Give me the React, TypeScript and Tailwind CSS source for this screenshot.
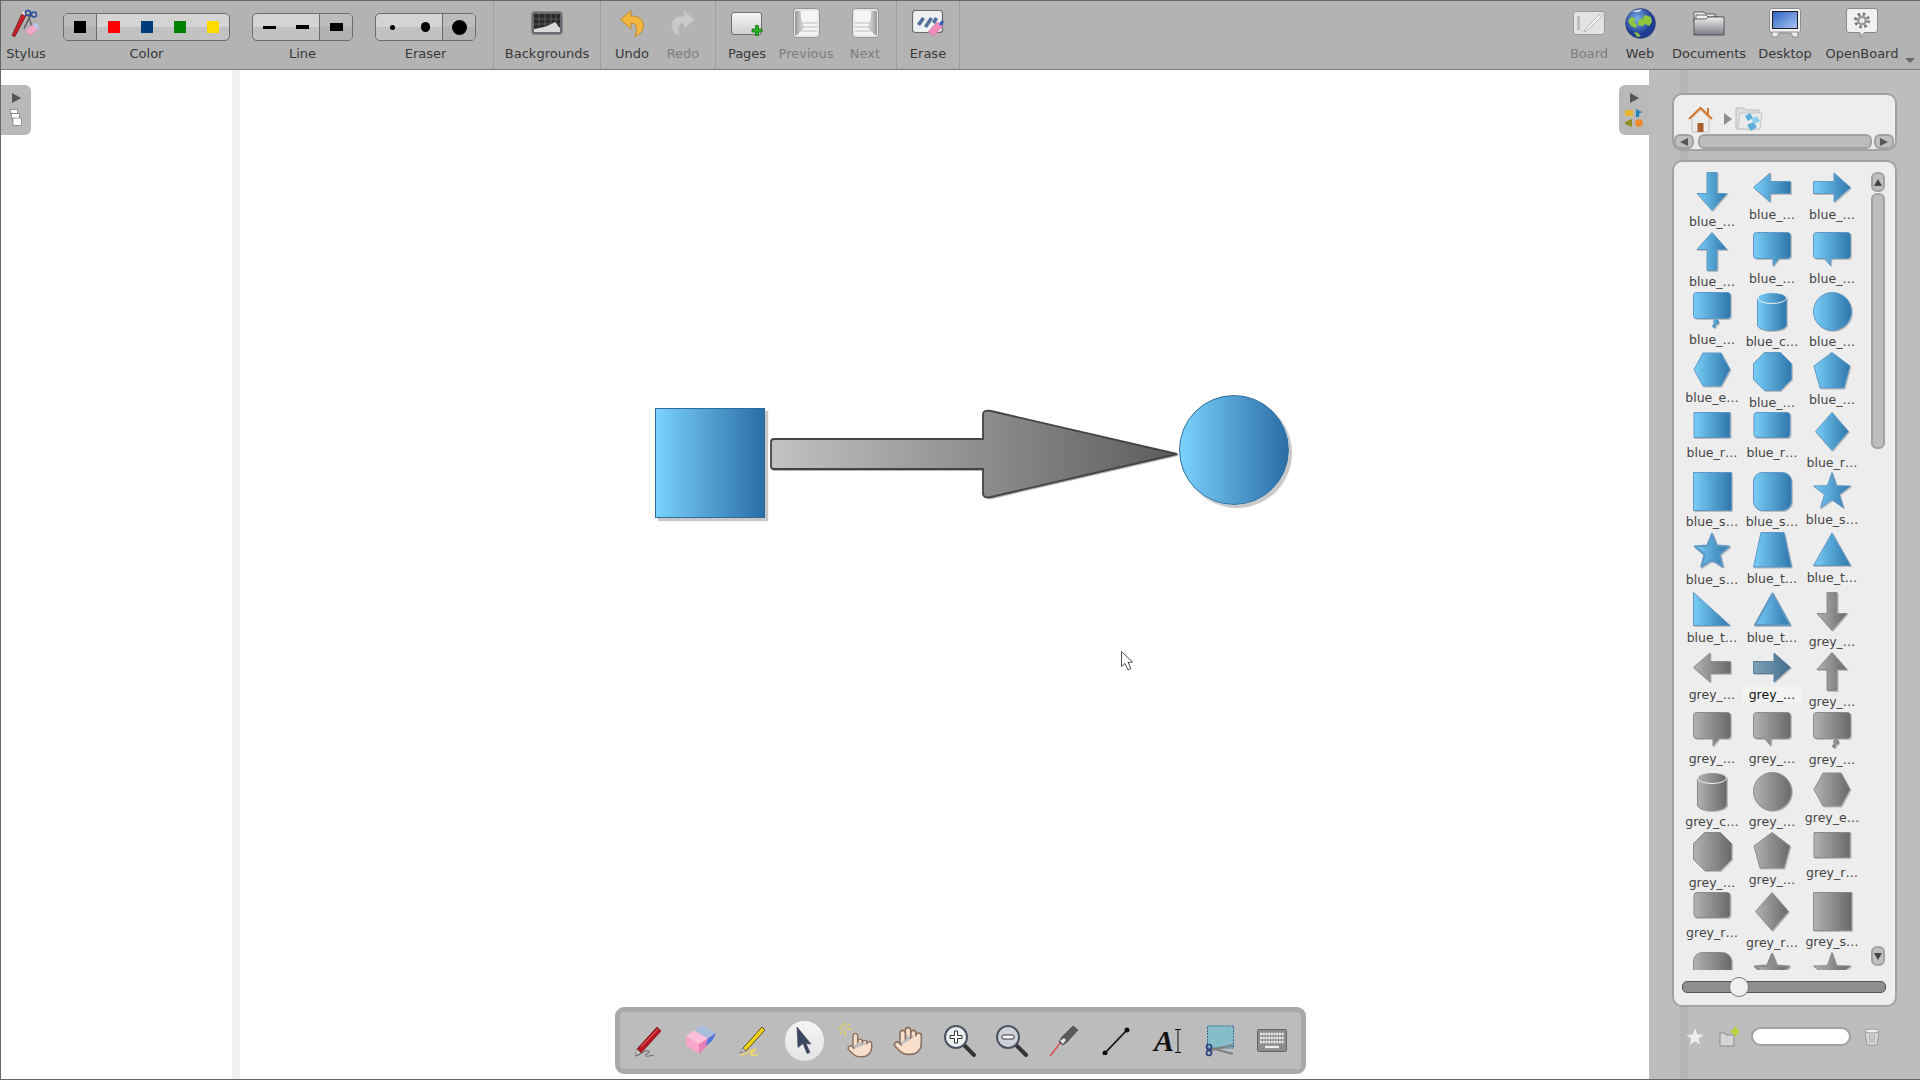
import React from 'react';
import { Hand, Pointer } from 'lucide-react';

const star = (cx: number, cy: number, R: number, r: number) => {
    const pts: string[] = [];
    for (let i = 0; i < 10; i++) {
        const a = (-90 + i * 36) * (Math.PI / 180);
        const d = i % 2 === 0 ? R : r;
        pts.push(`${(cx + d * Math.cos(a)).toFixed(1)} ${(cy + d * Math.sin(a)).toFixed(1)}`);
    }
    return `M${pts.join('L')}z`;
};

type ShapeDef = { w: number; h: number; body: React.ReactNode };

const SHAPES: Record<string, ShapeDef> = {
    down: { w: 32, h: 39, body: <path d="M11 .5h10v21h10L16 38.5 1 21.5h10z" /> },
    up: { w: 32, h: 39, body: <path d="M16 .5l15 17H21v21H11v-21H1z" /> },
    left: { w: 38, h: 32, body: <path d="M.5 15.5L17 1v8.5h20.5v12H17V30z" /> },
    right: { w: 38, h: 32, body: <path d="M37.5 15.5L21 1v8.5H.5v12H21V30z" /> },
    bubbleR: { w: 38, h: 36, body: <path d="M3.5.5h31a3 3 0 0 1 3 3v20a3 3 0 0 1-3 3H26l-6 7.5v-7.5H3.5a3 3 0 0 1-3-3v-20a3 3 0 0 1 3-3z" /> },
    bubbleL: { w: 38, h: 36, body: <path d="M3.5.5h31a3 3 0 0 1 3 3v20a3 3 0 0 1-3 3H18l-.5 7-6-7H3.5a3 3 0 0 1-3-3v-20a3 3 0 0 1 3-3z" /> },
    bubbleT: {
        w: 38,
        h: 37,
        body: (
            <>
                <rect x=".5" y=".5" width="37" height="26" rx="3" />
                <circle cx="23" cy="30" r="2.5" />
                <circle cx="21" cy="34" r="1.5" />
            </>
        ),
    },
    cyl: {
        w: 30,
        h: 39,
        body: (
            <>
                <path d="M.5 6v27c0 3 6 5.5 14.5 5.5S29.500 36 29.500 33V6z" />
                <ellipse cx="15" cy="6" rx="14.500" ry="5.500" stroke="#f2f2f2" />
            </>
        ),
    },
    circle: { w: 39, h: 39, body: <circle cx="19.500" cy="19.500" r="19" /> },
    hex: { w: 38, h: 35, body: <path d="M10 1h18l9 16.500L28 34H10L1 17.500z" /> },
    oct: { w: 39, h: 40, body: <path d="M11.500.5h16l11 11v16l-11 11h-16l-11-11v-16z" /> },
    pent: { w: 38, h: 37, body: <path d="M19 .5L37 14l-6 22H7L1 14z" /> },
    rect: { w: 38, h: 30, body: <path d="M1 .5h36v25H1z" /> },
    rrect: { w: 38, h: 30, body: <rect x="1" y=".5" width="36" height="25" rx="3" /> },
    diamond: { w: 34, h: 40, body: <path d="M17 .5l16.500 19L17 38.500.5 19.500z" /> },
    square: { w: 39, h: 39, body: <path d="M.5.5h38v38H.5z" /> },
    rsquare: { w: 39, h: 39, body: <rect x=".5" y=".5" width="38" height="38" rx="9" /> },
    star: { w: 38, h: 37, body: <path d={star(19, 20, 19.500, 7.800)} /> },
    rstar: { w: 38, h: 37, body: <path d={star(19, 20, 18, 8)} strokeWidth="2" strokeLinejoin="round" /> },
    trap: { w: 39, h: 36, body: <path d="M8 .5h23L38.500 35H.5z" /> },
    tri: { w: 38, h: 35, body: <path d="M19 1l18.500 32.500H.5z" /> },
    rtri: { w: 38, h: 35, body: <path d="M.5.5l36.500 33H.5z" /> },
    rdtri: { w: 39, h: 35, body: <path d="M19.500 1.500l17.500 31.500H2z" strokeWidth="2" strokeLinejoin="round" /> },
};

const ROWS: [string, string][][] = [
    [['down', 'blue_…'], ['left', 'blue_…'], ['right', 'blue_…']],
    [['up', 'blue_…'], ['bubbleR', 'blue_…'], ['bubbleL', 'blue_…']],
    [['bubbleT', 'blue_…'], ['cyl', 'blue_c…'], ['circle', 'blue_…']],
    [['hex', 'blue_e…'], ['oct', 'blue_…'], ['pent', 'blue_…']],
    [['rect', 'blue_r…'], ['rrect', 'blue_r…'], ['diamond', 'blue_r…']],
    [['square', 'blue_s…'], ['rsquare', 'blue_s…'], ['star', 'blue_s…']],
    [['rstar', 'blue_s…'], ['trap', 'blue_t…'], ['tri', 'blue_t…']],
    [['rtri', 'blue_t…'], ['rdtri', 'blue_t…'], ['down', 'grey_…']],
    [['left', 'grey_…'], ['right', 'grey_…'], ['up', 'grey_…']],
    [['bubbleR', 'grey_…'], ['bubbleL', 'grey_…'], ['bubbleT', 'grey_…']],
    [['cyl', 'grey_c…'], ['circle', 'grey_…'], ['hex', 'grey_e…']],
    [['oct', 'grey_…'], ['pent', 'grey_…'], ['rect', 'grey_r…']],
    [['rrect', 'grey_r…'], ['diamond', 'grey_r…'], ['square', 'grey_s…']],
    // last row is cut by the scroll area, its labels never show
    [['rsquare', 'grey'], ['rstar', 'grey'], ['star', 'grey']],
];

const Thumb = ({ kind, label, selected }: { kind: string; label: string; selected: boolean }) => {
    const s = SHAPES[kind];
    const grey = label.startsWith('grey');
    const fill = selected ? 'url(#selGrad)' : grey ? 'url(#greyGrad)' : 'url(#blueGrad)';
    const stroke = selected ? '#5a7f9a' : grey ? '#8a8a8a' : '#5d97c2';
    return (
        <div className="flex flex-col items-center">
            <svg width={s.w} height={s.h} className="shrink-0 overflow-visible drop-shadow-[1px_1px_0.5px_rgba(0,0,0,0.2)]">
                <g fill={fill} stroke={stroke} strokeWidth="1">{s.body}</g>
            </svg>
            {label.includes('…') && (
                <div className={`mt-[3px] w-[60px] text-center text-[12.5px] leading-[15px] ${selected ? 'bg-[#f3f3f3] text-[#111]' : 'text-[#444]'}`}>
                    {label}
                </div>
            )}
        </div>
    );
};

const Tool = ({ w, label, off, children }: { w: string; label: string; off?: boolean; children: React.ReactNode }) => (
    <div className={`flex shrink-0 flex-col items-center ${w}`}>
        <div className="flex h-[45px] items-center justify-center pb-px">{children}</div>
        <div className={`h-[16px] text-[13px] leading-[16px] whitespace-nowrap ${off ? 'text-[#7e7e7e]' : 'text-[#383838]'}`}>{label}</div>
    </div>
);

const Sep = () => <div className="h-full w-px shrink-0 border-l border-dotted border-[#8e8e8e]" />;

const Group = ({ label, w, selected, items }: { label: string; w: string; selected: number; items: React.ReactNode[] }) => (
    <div className={`flex shrink-0 flex-col items-center ${w}`}>
        <div className="h-[45px] pt-3">
            <div className="flex h-[28px] rounded-[5px] border border-[#6c6c6c] bg-linear-to-b from-[#d4d4d4] from-50% to-[#c2c2c2] to-50%">
                {items.map((it, i) => (
                    <div
                        key={i}
                        className={`flex h-full w-[33px] items-center justify-center ${
                            i === selected
                                ? `bg-linear-to-b from-[#bcbcbc] from-50% to-[#b2b2b2] to-50% ${i === 0 ? 'rounded-l-[4px] border-r border-[#6c6c6c]' : 'rounded-r-[4px] border-l border-[#6c6c6c]'}`
                                : ''
                        }`}
                    >
                        {it}
                    </div>
                ))}
            </div>
        </div>
        <div className="h-[16px] text-[13px] leading-[16px] text-[#383838]">{label}</div>
    </div>
);

const Swatch = ({ className }: { className: string }) => <div className={`h-[12px] w-[12px] ${className}`} />;

const StylusIcon = () => (
    <svg width="32" height="29" viewBox="0 0 32 28">
        <path d="M2 26L12 4l4 2L5 27z" fill="#c8202a" stroke="#6d1014" strokeWidth=".7" />
        <path d="M11 4l2-3 3 2-1 3z" fill="#e8e8e8" stroke="#777" strokeWidth=".5" />
        <path d="M14 19L21 5" stroke="#555" strokeWidth="1.500" />
        <path d="M22 17L18 5" stroke="#666" strokeWidth="1.500" />
        <circle cx="24" cy="5" r="2.500" fill="none" stroke="#2d4fa3" strokeWidth="1.500" />
        <circle cx="18" cy="3.500" r="2.500" fill="none" stroke="#2d4fa3" strokeWidth="1.500" />
        <path d="M16 20l10-7 4 5-9 8-5-3z" fill="#f2a9c9" stroke="#b98aa5" strokeWidth=".5" />
        <path d="M23 15l3-2 4 5-3 2z" fill="#b8c6e8" />
    </svg>
);

const BackgroundsIcon = () => (
    <svg width="32" height="24" viewBox="0 0 32 24">
        <rect x=".5" y=".5" width="31" height="23" rx="3" fill="#666c74" stroke="#8a8a8a" />
        <rect x="3" y="3" width="26" height="18" fill="#2a2a2a" />
        <path d="M3 8h26M3 13h26M8 3v18M14 3v18M20 3v18M25 3v18" stroke="#6c6c6c" strokeWidth=".7" />
        <path d="M3 21v-3c8-1 14-3 21-7 2 3 4 5 5 6v4z" fill="#d8d8d8" />
    </svg>
);

const UndoIcon = ({ off, flip }: { off?: boolean; flip?: boolean }) => (
    <svg width="24" height="27" viewBox="0 0 24 27" className={flip ? '' : '-scale-x-100'}>
        <path
            d="M13 .5L23.500 9.500 13 19v-6C8 13 6 17 9 26.500 3 24 .5 20 .5 15.500.5 9 6 6 13 6z"
            fill={off ? '#c9c9c9' : '#f3b540'}
            stroke={off ? '#bbbbbb' : '#b17f26'}
            strokeWidth=".8"
        />
    </svg>
);

const PagesIcon = () => (
    <svg width="32" height="27" viewBox="0 0 32 27" className="translate-y-[2px]">
        <rect x=".5" y=".5" width="30" height="22" rx="2.500" fill="url(#pageGrad)" stroke="#6f6f6f" />
        <path d="M22 15h3.500v-3.500h3V15H32v3h-3.500v3.500h-3V18H22z" transform="translate(-1 2)" fill="#27b224" stroke="#116e10" strokeWidth=".8" />
    </svg>
);

const TurnIcon = ({ flip }: { flip?: boolean }) => (
    <svg width="27" height="30" viewBox="0 0 27 30" className={flip ? '-scale-x-100' : ''}>
        <rect x=".5" y=".5" width="26" height="29" rx="3" fill="#e6e6e6" stroke="#949494" />
        <path d="M8 3h16v24H4l8-8c-3-4-5-10-4-16z" fill="#f5f5f5" />
        <path d="M2 3h6c-1 6 1 12 4 16l-8 8H2z" fill="url(#curlGrad)" />
        <path d="M9 15h15M7 19h17M5 23h19" stroke="#bdbdbd" strokeWidth="1" />
    </svg>
);

const EraseIcon = () => (
    <svg width="33" height="27" viewBox="0 0 33 27">
        <rect x=".5" y=".5" width="30" height="22" rx="3" fill="#eef0f2" stroke="#6b6b6b" strokeWidth="1.200" />
        <path d="M5 14l5-7 3 2-5 7zM12 16l6-9 3 2-6 9zM20 12l3-5 3 2-3 5z" fill="#526f9c" />
        <path d="M16 22l9-10 6 4-9 10z" fill="#f08cbd" stroke="#c86c99" strokeWidth=".5" />
        <path d="M27 14l3-4 2 2-3 4z" fill="#2a5fc0" />
    </svg>
);

const BoardIcon = () => (
    <svg width="32" height="24" viewBox="0 0 32 24">
        <rect x=".5" y=".5" width="31" height="23" rx="2.500" fill="#e3e3e3" stroke="#9a9a9a" />
        <rect x="4" y="5" width="3" height="14" fill="#bdbdbd" />
        <path d="M11 21l3-5L27 3l2 2-13 13z" fill="#f4f4f4" stroke="#a8a8a8" strokeWidth=".8" />
    </svg>
);

const GlobeIcon = () => (
    <svg width="31" height="31" viewBox="0 0 31 31">
        <circle cx="15.500" cy="15.500" r="15" fill="url(#globeGrad)" stroke="#23356f" strokeWidth=".5" />
        <path d="M13 13l5-3 2-3 6 2 1 5-3 4-4-2-2 2-5-1zM3 13l3-4 4 1-1 4 3 3-1 3-5-2zM9 24l4 1 3 3-4 1z" fill="#8fc63d" />
        <path d="M7 4c3-2 7-3 10-2l-3 2H9z" fill="#e6f2fb" opacity=".8" />
    </svg>
);

const FolderIcon = () => (
    <svg width="32" height="28" viewBox="0 0 32 28">
        <path d="M1 3h10l2 2h9v8H1z" fill="#e6e6e6" stroke="#444" strokeWidth=".8" />
        <path d="M3 6h10l2 2h11v8H3z" fill="#f0f0f0" stroke="#444" strokeWidth=".8" />
        <path d="M1 26V10h12l2-2h16v18z" fill="url(#folderGrad)" stroke="#3d3d3d" strokeWidth=".8" />
    </svg>
);

const DesktopIcon = () => (
    <svg width="32" height="30" viewBox="0 0 32 30">
        <rect x=".5" y=".5" width="31" height="24" rx="2.500" fill="#f3f3f3" stroke="#8c8c8c" />
        <rect x="3.500" y="3.500" width="25" height="17" fill="url(#screenGrad)" stroke="#1d1d1d" />
        <path d="M3 24v5h5l2-4h12l2 4h5v-5z" fill="#eeeeee" stroke="#8c8c8c" />
    </svg>
);

const OpenBoardIcon = () => (
    <svg width="32" height="30" viewBox="0 0 32 30">
        <path d="M3 .5h26a2.500 2.500 0 0 1 2.500 2.500v19a2.500 2.500 0 0 1-2.500 2.500H18l-3 5-1-5H3A2.500 2.500 0 0 1 .5 22V3A2.500 2.500 0 0 1 3 .5z" fill="#f1f1f1" stroke="#8a8a8a" />
        <circle cx="16" cy="12.500" r="6.500" fill="none" stroke="#777" strokeWidth="3" strokeDasharray="2.500 2.600" />
        <circle cx="16" cy="12.500" r="5" fill="#9a9a9a" />
        <circle cx="16" cy="12.500" r="2.500" fill="#efefef" />
    </svg>
);

const HomeIcon = () => (
    <svg width="25" height="27" viewBox="0 0 25 27">
        <path d="M4 12v14h17V12L12.500 4z" fill="#ededed" stroke="#b0b0b0" strokeWidth=".7" />
        <rect x="9.500" y="17" width="6" height="9" fill="#a85f2d" />
        <path d="M1 13L12.500 2 24 13" fill="none" stroke="#d9762b" strokeWidth="2" />
        <path d="M19 2h2v6h-2z" fill="#d9762b" />
    </svg>
);

const LibFolderIcon = () => (
    <svg width="28" height="27" viewBox="0 0 28 27">
        <path d="M1 2h8l2 2h13v19H1z" fill="#dcdcdc" stroke="#bcbcbc" />
        <path d="M5 7h22l-2 16H3z" fill="#eaeaea" stroke="#c6c6c6" />
        <path d="M10 10l5-3 3 5-5 3z" fill="#5aaed8" />
        <path d="M16 13l6-3 3 5-5 3z" fill="#8ccdea" />
        <path d="M12 19l6-3 4 5-6 4z" fill="#5aaed8" />
    </svg>
);

const ScrollBtn = ({ dir, className }: { dir: 'l' | 'r' | 'u' | 'd'; className: string }) => (
    <div className={`flex items-center justify-center rounded-[6px] border-2 border-[#a2a2a2] bg-[#bfbfbf] ${className}`}>
        {dir === 'l' && <div className="h-0 w-0 border-y-[4px] border-r-[8px] border-y-transparent border-r-[#555]" />}
        {dir === 'r' && <div className="h-0 w-0 border-y-[4px] border-l-[8px] border-y-transparent border-l-[#555]" />}
        {dir === 'u' && <div className="h-0 w-0 border-x-[4px] border-b-[7px] border-x-transparent border-b-[#444]" />}
        {dir === 'd' && <div className="h-0 w-0 border-x-[4px] border-t-[7px] border-x-transparent border-t-[#444]" />}
    </div>
);

const BOTTOM_TOOLS: React.ReactNode[] = [
    <svg key="pen" width="34" height="34" viewBox="0 0 34 34">
        <path d="M6 25L26 3l4 4L10 29z" fill="#b8161f" stroke="#6e0d12" strokeWidth=".7" />
        <path d="M10 23L27 5" stroke="#ee6b70" strokeWidth="1" />
        <path d="M6 25l4 4-6 3z" fill="#c9c9c9" stroke="#555" strokeWidth=".5" />
        <path d="M4 32c6-1 10-7 14-5 2 2-5 3-3 5 3 1 6-1 8-1" fill="none" stroke="#777" strokeWidth="1.200" />
    </svg>,
    <svg key="eraser" width="34" height="34" viewBox="0 0 34 34">
        <path d="M3 12L19 1l14 8-17 11z" fill="#fbc0da" />
        <path d="M11 6.500L19 1l14 8-8 5.500z" fill="#a8bcdc" />
        <path d="M3 12l13 8v10L3 22z" fill="#f9a6cd" />
        <path d="M16 20L33 9l-9 13-8 8z" fill="#e87fb4" />
        <path d="M25 14.500L33 9l-4 8-6.500 5z" fill="#4a78e0" />
    </svg>,
    <svg key="marker" width="34" height="34" viewBox="0 0 34 34">
        <path d="M8 24L27 3l3 3L11 27z" fill="#f2cf17" stroke="#3c3316" strokeWidth=".8" />
        <path d="M8 24l3 3-6 2z" fill="#cfcfcf" stroke="#555" strokeWidth=".5" />
        <path d="M5 31c5 0 12-5 15-6 2 1-6 4-4 6 3 1 6-1 7-1" fill="none" stroke="#f0d768" strokeWidth="1.600" />
    </svg>,
    <div key="select" className="flex h-[40px] w-[39px] items-center justify-center rounded-full bg-linear-to-b from-[#f5f5f5] to-[#e4e4e4]">
        <svg width="16" height="27" viewBox="0 0 16 27">
            <path d="M1 0l14 17-5-.5 4 9-3 1-4-10-5 4z" fill="#3c4660" stroke="#2a3044" strokeWidth=".5" />
        </svg>
    </div>,
    <div key="pointer" className="relative h-[36px] w-[36px]">
        <Pointer size={28} strokeWidth={1.200} fill="#f7dfcb" color="#8a7060" className="absolute right-0 bottom-0" />
        <svg width="16" height="16" viewBox="0 0 16 16" className="absolute -top-[2px] -left-[1px]">
            <path d="M8 1v5M8 10v5M1 8h5M10 8h5M3 3l3 3M13 3l-3 3M3 13l3-3" stroke="#f0d93c" strokeWidth="1" />
        </svg>
    </div>,
    <Hand key="hand" size={32} strokeWidth={1.200} fill="#f7dfcb" color="#8a7060" />,
    <svg key="zoomin" width="34" height="34" viewBox="0 0 34 34">
        <path d="M20 20l11 11" stroke="#333" strokeWidth="4" strokeLinecap="round" />
        <circle cx="13" cy="13" r="11" fill="#eceff2" stroke="#4c5463" strokeWidth="2" />
        <path d="M11.500 7h3v4.500H19v3h-4.500V19h-3v-4.500H7v-3h4.500z" fill="#fff" stroke="#333" strokeWidth="1" />
    </svg>,
    <svg key="zoomout" width="34" height="34" viewBox="0 0 34 34">
        <path d="M20 20l11 11" stroke="#333" strokeWidth="4" strokeLinecap="round" />
        <circle cx="13" cy="13" r="11" fill="#cfd3d8" stroke="#4c5463" strokeWidth="2" />
        <rect x="7" y="11" width="12" height="4" rx="1" fill="#fff" stroke="#333" strokeWidth="1" />
    </svg>,
    <svg key="laser" width="34" height="34" viewBox="0 0 34 34">
        <path d="M3 32l11-14" stroke="#d9534f" strokeWidth="1.500" />
        <path d="M12 18l3-5 11-11 5 4-11 12-4 3z" fill="#5a5a5a" stroke="#333" strokeWidth=".6" />
        <path d="M13 17l4-3 2 2-3 4z" fill="#e4e4e4" />
    </svg>,
    <svg key="line" width="28" height="28" viewBox="0 0 28 28">
        <path d="M3 26L25 3" stroke="#111" strokeWidth="1.800" />
        <circle cx="3" cy="26" r="2.500" fill="#111" />
        <circle cx="25" cy="3" r="2.500" fill="#111" />
    </svg>,
    <div key="text" className="flex items-center">
        <span className="font-['Liberation_Serif',serif] text-[30px] leading-none font-bold text-[#111] italic">A</span>
        <svg width="8" height="24" viewBox="0 0 8 24">
            <path d="M1 .5h6M4 .5v23M1 23.500h6" stroke="#111" strokeWidth="1" fill="none" />
        </svg>
    </div>,
    <svg key="capture" width="30" height="32" viewBox="0 0 30 32">
        <rect x="2.500" y="1" width="26" height="22" fill="#86bdca" stroke="#2d6a9a" strokeDasharray="2 1" />
        <path d="M6 25l22-5M6 23l22 6" stroke="#7f7f7f" strokeWidth="2" />
        <circle cx="4" cy="22" r="2.500" fill="none" stroke="#2b3f7e" strokeWidth="1.600" />
        <circle cx="4" cy="28" r="2.500" fill="none" stroke="#2b3f7e" strokeWidth="1.600" />
    </svg>,
    <svg key="keyboard" width="30" height="23" viewBox="0 0 30 23">
        <rect x=".5" y=".5" width="29" height="22" rx="1" fill="#8c8c8c" stroke="#666" />
        <path d="M3 5h24M3 9h24M3 13h24" stroke="#ededed" strokeWidth="2.400" strokeDasharray="2 .7" />
        <path d="M8 18h14" stroke="#ededed" strokeWidth="2.400" />
    </svg>,
];

export default function App() {
    return (
        <div className="flex h-screen w-screen flex-col overflow-hidden border-y border-l border-[#666] bg-white font-['DejaVu_Sans',sans-serif]">
            <svg className="absolute h-0 w-0">
                <defs>
                    <linearGradient id="blueGrad"><stop offset="0" stopColor="#79cef8" /><stop offset="1" stopColor="#2f76ab" /></linearGradient>
                    <linearGradient id="greyGrad"><stop offset="0" stopColor="#b2b2b2" /><stop offset="1" stopColor="#696969" /></linearGradient>
                    <linearGradient id="selGrad"><stop offset="0" stopColor="#7d9fb8" /><stop offset="1" stopColor="#446f8e" /></linearGradient>
                    <linearGradient id="bigArrow"><stop offset="0" stopColor="#c2c2c2" /><stop offset="1" stopColor="#5c5c5c" /></linearGradient>
                    <linearGradient id="pageGrad" x2="0" y2="1"><stop offset="0" stopColor="#f7f7f7" /><stop offset="1" stopColor="#cfcfcf" /></linearGradient>
                    <linearGradient id="curlGrad"><stop offset="0" stopColor="#9a9a9a" /><stop offset="1" stopColor="#e8e8e8" /></linearGradient>
                    <linearGradient id="folderGrad" x2="0" y2="1"><stop offset="0" stopColor="#eeeef0" /><stop offset="1" stopColor="#7c7d85" /></linearGradient>
                    <linearGradient id="screenGrad" x2="1" y2="1"><stop offset="0" stopColor="#2c5fc0" /><stop offset="1" stopColor="#a9c8f4" /></linearGradient>
                    <radialGradient id="globeGrad" cx=".4" cy=".35"><stop offset="0" stopColor="#7db4e8" /><stop offset="1" stopColor="#1f3c94" /></radialGradient>
                </defs>
            </svg>

            {/* top toolbar */}
            <div className="flex h-[69px] shrink-0 items-stretch border-b border-[#7d7d7d] bg-[#b3b3b3]">
                <Tool w="w-[50px]" label="Stylus"><StylusIcon /></Tool>
                <div className="w-[12px] shrink-0" />
                <Group
                    label="Color"
                    w="w-[167px]"
                    selected={0}
                    items={[
                        <Swatch key="k" className="bg-black" />,
                        <Swatch key="r" className="bg-[#ff0000]" />,
                        <Swatch key="b" className="bg-[#003c7d]" />,
                        <Swatch key="g" className="bg-[#008000]" />,
                        <Swatch key="y" className="bg-[#ffdc00]" />,
                    ]}
                />
                <div className="w-[22px] shrink-0" />
                <Group
                    label="Line"
                    w="w-[101px]"
                    selected={2}
                    items={[
                        <div key="1" className="h-[3px] w-[13px] bg-black" />,
                        <div key="2" className="h-[4px] w-[13px] bg-black" />,
                        <div key="3" className="h-[8px] w-[13px] bg-black" />,
                    ]}
                />
                <div className="w-[22px] shrink-0" />
                <Group
                    label="Eraser"
                    w="w-[101px]"
                    selected={2}
                    items={[
                        <div key="1" className="h-[5px] w-[5px] rounded-full bg-black" />,
                        <div key="2" className="h-[10px] w-[9px] rounded-full bg-black" />,
                        <div key="3" className="h-[15px] w-[15px] rounded-full bg-black" />,
                    ]}
                />
                <div className="w-[17px] shrink-0" />
                <Sep />
                <Tool w="w-[106px]" label="Backgrounds"><BackgroundsIcon /></Tool>
                <Sep />
                <Tool w="w-[62px]" label="Undo"><UndoIcon /></Tool>
                <Tool w="w-[40px]" label="Redo" off><UndoIcon off flip /></Tool>
                <div className="w-[12px] shrink-0" />
                <Sep />
                <Tool w="w-[62px]" label="Pages"><PagesIcon /></Tool>
                <Tool w="w-[56px]" label="Previous" off><TurnIcon /></Tool>
                <Tool w="w-[62px]" label="Next" off><TurnIcon flip /></Tool>
                <Sep />
                <Tool w="w-[62px]" label="Erase"><EraseIcon /></Tool>
                <Sep />
                <div className="flex-1" />
                <Tool w="w-[50px]" label="Board" off><BoardIcon /></Tool>
                <Tool w="w-[52px]" label="Web"><GlobeIcon /></Tool>
                <Tool w="w-[86px]" label="Documents"><FolderIcon /></Tool>
                <Tool w="w-[66px]" label="Desktop"><DesktopIcon /></Tool>
                <Tool w="w-[88px]" label="OpenBoard"><OpenBoardIcon /></Tool>
                <div className="flex w-[14px] shrink-0 justify-center pt-[57px] pr-[6px]">
                    <div className="h-0 w-0 border-x-[5px] border-t-[5px] border-x-transparent border-t-[#666]" />
                </div>
            </div>

            <div className="flex min-h-0 flex-1">
                {/* left drawer edge */}
                <div className="relative w-[231px] shrink-0">
                    <div className="absolute top-[15px] left-0 flex h-[50px] w-[30px] flex-col items-center rounded-r-[6px] bg-[#b9b9b9] pt-[8px]">
                        <div className="h-0 w-0 border-y-[5px] border-l-[9px] border-y-transparent border-l-[#555]" />
                        <svg width="12" height="17" viewBox="0 0 12 17" className="mt-[6px]">
                            <rect x=".5" y=".5" width="7" height="4" fill="#fff" stroke="#777" strokeWidth=".7" />
                            <rect x="1.500" y="4.500" width="8" height="5" fill="#fff" stroke="#777" strokeWidth=".7" />
                            <rect x="3" y="9" width="8.500" height="7.500" fill="#fff" stroke="#777" strokeWidth=".7" />
                        </svg>
                    </div>
                </div>
                <div className="w-[8px] shrink-0 bg-[#f0f0f0]" />

                {/* board */}
                <div className="relative min-w-0 flex-1">
                    <div className="absolute top-[338px] left-[415px] h-[110px] w-[110px] border border-[#2d6d9d] bg-linear-to-r from-[#7bd2fd] to-[#2a6ea6] shadow-[3px_3px_1px_#c8c8c8]" />
                    <svg width="420" height="100" viewBox="0 0 420 100" className="absolute top-[335px] left-[526px] overflow-visible drop-shadow-[1.500px_1.500px_0.500px_rgba(0,0,0,0.3)]">
                        <path
                            d="M8 34h209V9c0-3 3-4 8-3l186 43-186 43c-5 1-8 0-8-3V64H8c-2 0-3-1-3-3V37c0-2 1-3 3-3z"
                            fill="url(#bigArrow)"
                            stroke="#444"
                            strokeWidth="1.800"
                        />
                    </svg>
                    <div className="absolute top-[325px] left-[939px] h-[110px] w-[110px] rounded-full border border-[#2d6d9d] bg-linear-to-r from-[#7bd2fd] to-[#2a6ea6] shadow-[3px_3px_1px_#c8c8c8]" />
                    <svg width="12" height="20" viewBox="0 0 12 20" className="absolute top-[581px] left-[881px]">
                        <path d="M.5.5v15l3.500-3 3 6.500 3-1.500-3-6 4.500-.5z" fill="#fff" stroke="#222" strokeWidth=".8" />
                    </svg>

                    {/* floating tools */}
                    <div className="absolute bottom-[5px] left-[375px] flex h-[67px] w-[691px] items-center rounded-[9px] border-[5px] border-[#a9a9a9] bg-[#bcbcbc] pl-[2px]">
                        {BOTTOM_TOOLS.map((t, i) => (
                            <div key={i} className="flex h-[40px] w-[52px] shrink-0 items-center justify-center">{t}</div>
                        ))}
                    </div>

                    <div className="absolute top-[15px] right-0 flex h-[50px] w-[30px] flex-col items-center rounded-l-[6px] bg-[#b9b9b9] pt-[8px]">
                        <div className="h-0 w-0 border-y-[5px] border-l-[9px] border-y-transparent border-l-[#555]" />
                        <svg width="18" height="18" viewBox="0 0 18 18" className="mt-[6px]">
                            <rect x="0" y="1" width="8" height="6" fill="#e9b52f" />
                            <path d="M11 0l6 3-3 2v3h-3z" fill="#1d86bf" />
                            <path d="M7 10v8l-7-3v-2z" fill="#8f8f20" />
                            <circle cx="14" cy="14" r="3.800" fill="#ee8a2c" />
                        </svg>
                    </div>
                </div>

                {/* library panel */}
                <div className="relative w-[271px] shrink-0 bg-[#bdbdbd] pt-[23px] pl-[23px]">
                    <div className="absolute top-0 bottom-0 left-[31px] w-[8px] bg-[#b5b5b5]" />

                    <div className="relative h-[58px] w-[225px] rounded-[10px] border-2 border-[#a2a2a2] bg-[#ededed]">
                        <div className="flex h-[39px] items-start pt-[11px] pl-[14px]">
                            <HomeIcon />
                            <div className="mt-[7px] ml-[11px] h-0 w-0 border-y-[6px] border-l-[8px] border-y-transparent border-l-[#8f8f8f]" />
                            <div className="ml-[3px]"><LibFolderIcon /></div>
                        </div>
                        <div className="flex">
                            <ScrollBtn dir="l" className="h-[15px] w-[20px]" />
                            <div className="ml-[4px] h-[15px] w-[174px] rounded-[6px] border-2 border-[#a2a2a2] bg-[#bdbdbd]" />
                            <ScrollBtn dir="r" className="ml-[2px] h-[15px] w-[20px]" />
                        </div>
                    </div>

                    <div className="relative mt-[9px] h-[847px] w-[225px] rounded-[10px] border-2 border-[#a2a2a2] bg-[#ededed] pt-[10px] pl-[8px]">
                        <div className="flex h-[798px]">
                            <div className="grid h-full w-[180px] auto-rows-[60px] grid-cols-[60px_60px_60px] overflow-hidden">
                                {ROWS.flat().map(([kind, label], i) => (
                                    <Thumb key={i} kind={kind} label={label} selected={i === 25} />
                                ))}
                            </div>
                            <div className="ml-[9px] flex h-[794px] w-[14px] flex-col">
                                <ScrollBtn dir="u" className="h-[20px] w-[14px]" />
                                <div className="mt-[1px] h-[256px] w-[14px] rounded-[6px] border-2 border-[#a2a2a2] bg-[#bdbdbd]" />
                                <div className="flex-1" />
                                <ScrollBtn dir="d" className="h-[20px] w-[14px]" />
                            </div>
                        </div>
                        <div className="relative mt-[11px] h-[12px] w-[204px] rounded-[5px] border border-[#555] bg-[#8f8f8f]">
                            <div className="absolute top-[-5px] left-[46px] h-[20px] w-[20px] rounded-full border border-[#777] bg-[#f0f0f0]" />
                        </div>
                    </div>

                    <div className="relative mt-[20px] flex h-[19px] items-center">
                        <svg width="18" height="18" viewBox="0 0 18 18" className="ml-[14px]">
                            <path d={star(9, 9.500, 9, 3.800)} fill="#efefef" />
                        </svg>
                        <svg width="20" height="20" viewBox="0 0 20 20" className="ml-[15px]">
                            <path d="M1 19V6h5l1 2h8v11z" fill="#d6d6d6" stroke="#8a8a8a" />
                            <path d="M12 3h3V0h3v3h2v3h-2v3h-3V6h-3z" fill="#b5d334" />
                        </svg>
                        <div className="ml-[12px] h-[19px] w-[100px] rounded-full border-2 border-[#a2a2a2] bg-white" />
                        <svg width="16" height="18" viewBox="0 0 16 18" className="ml-[13px]">
                            <path d="M1 3h14l-2 14H3z" fill="#d9d9d9" stroke="#9a9a9a" />
                            <ellipse cx="8" cy="3" rx="7" ry="2" fill="#efefef" stroke="#9a9a9a" />
                            <path d="M5.500 6l.5 9M8 6v9M10.500 6l-.5 9" stroke="#a8a8a8" />
                        </svg>
                    </div>
                </div>
            </div>
        </div>
    );
}
